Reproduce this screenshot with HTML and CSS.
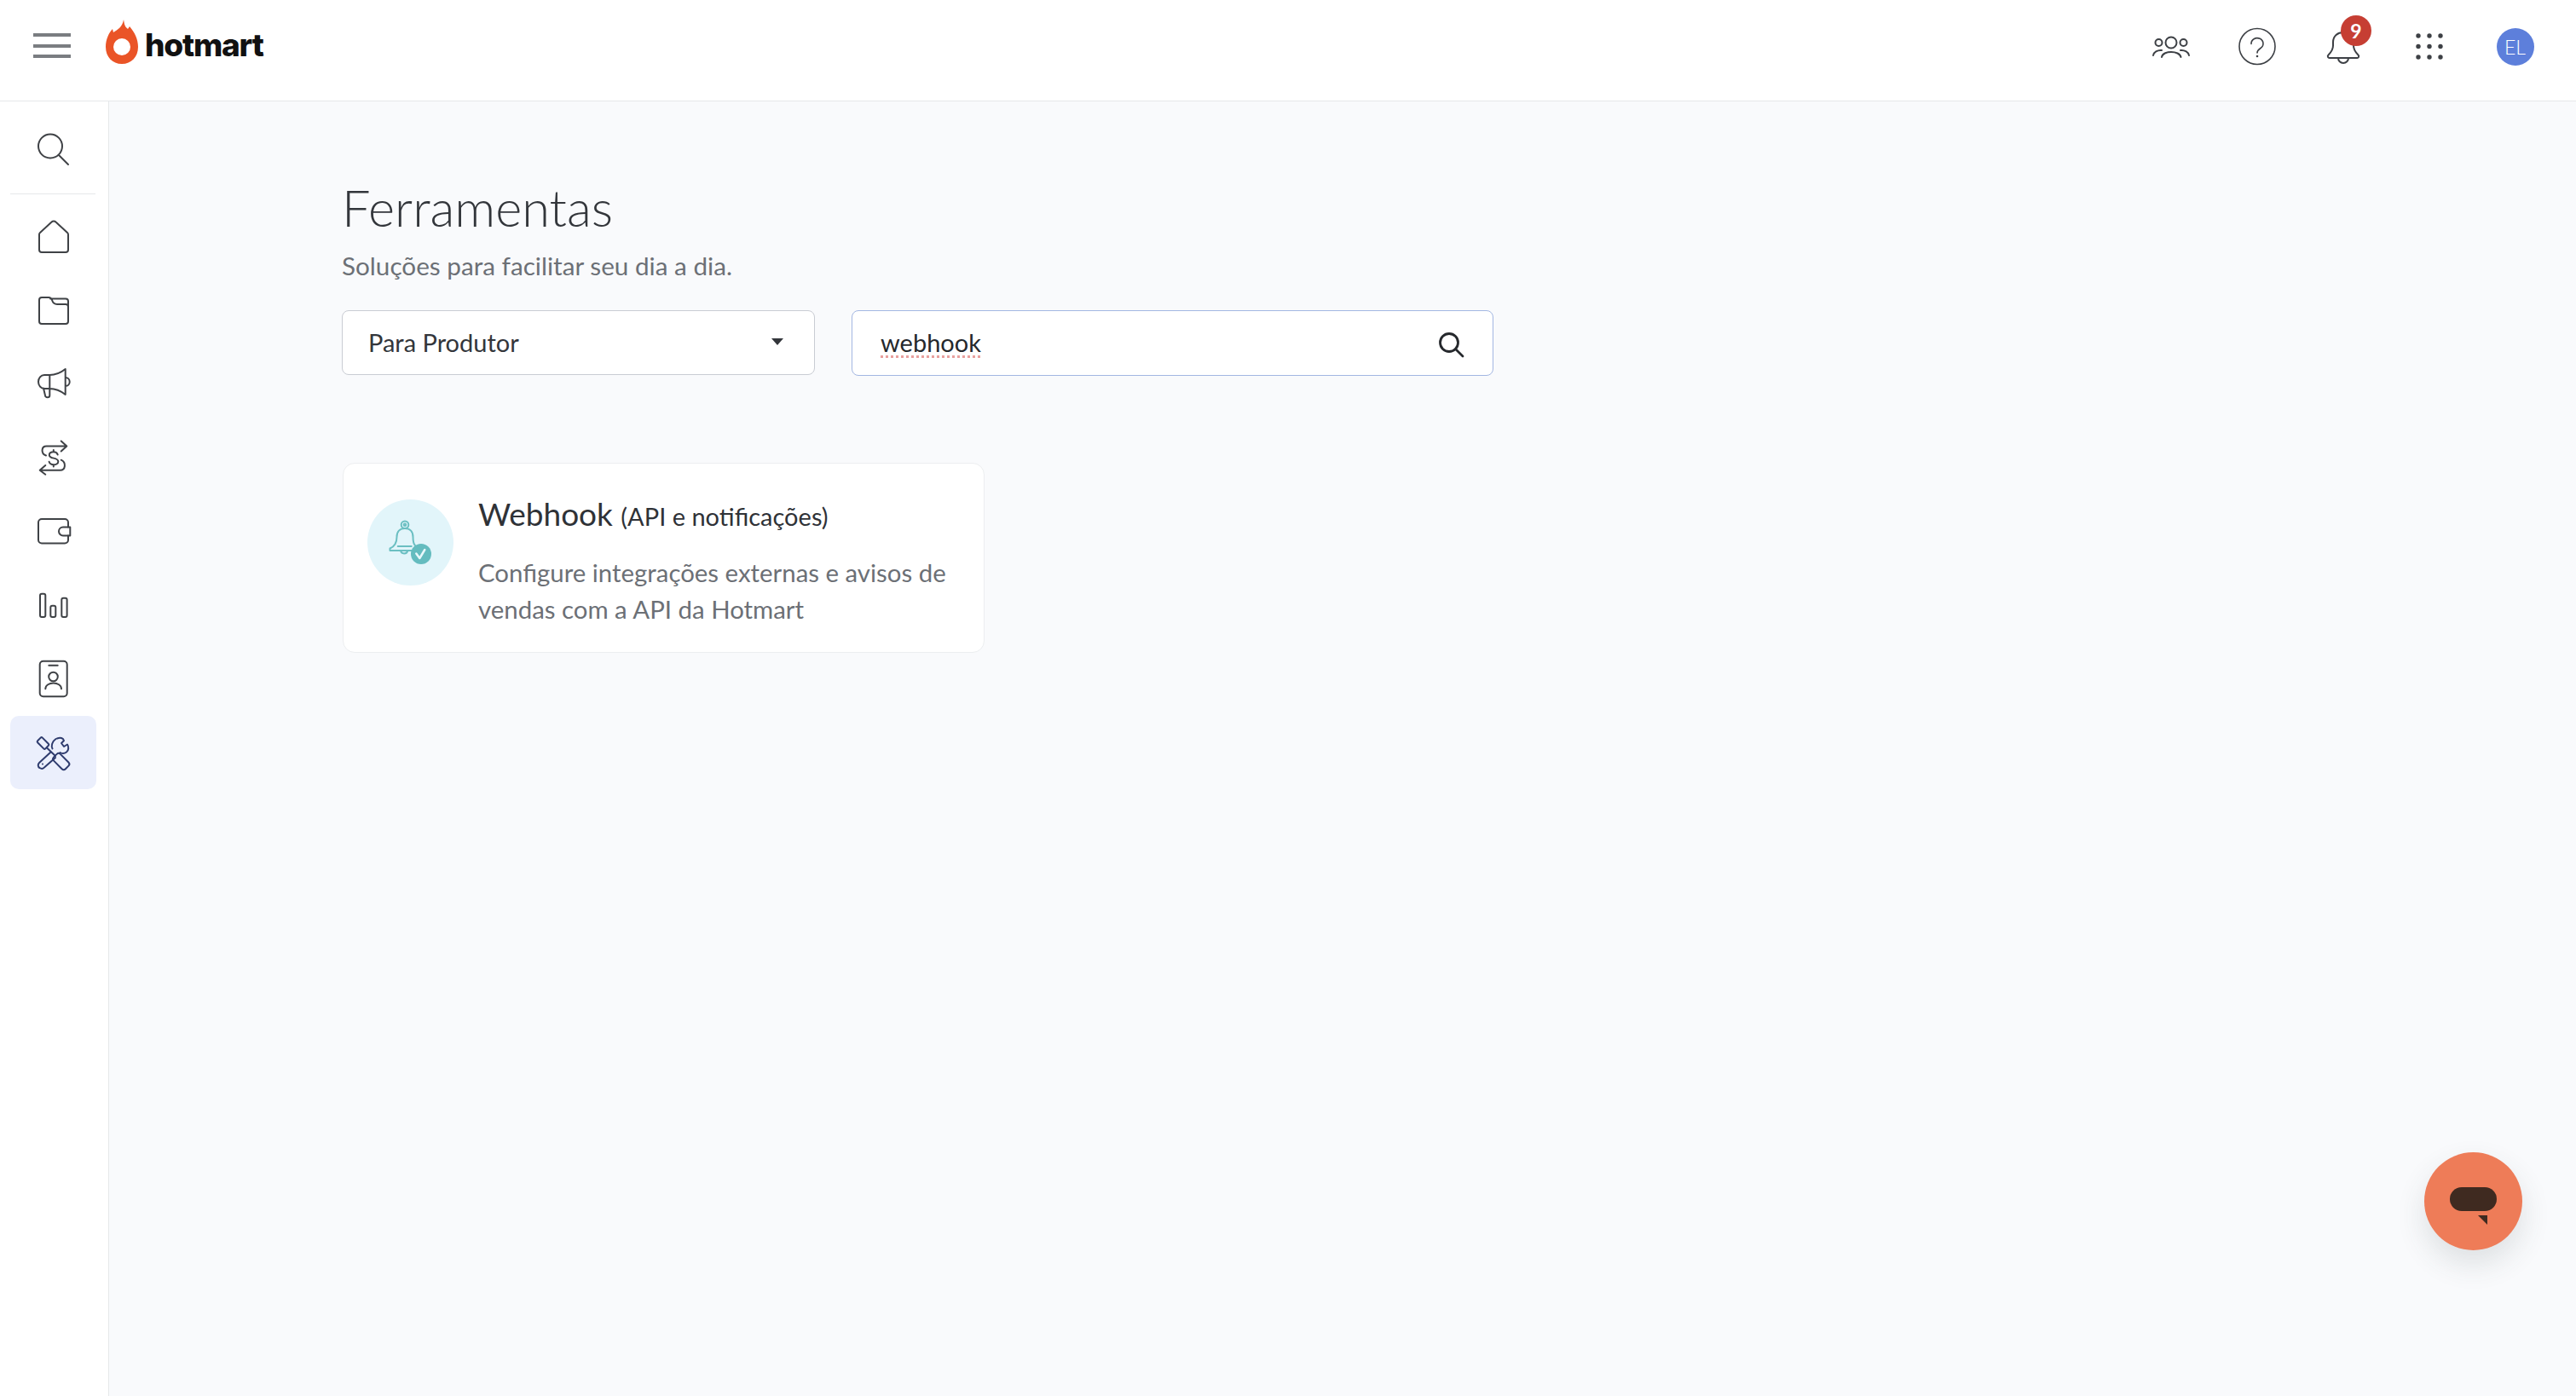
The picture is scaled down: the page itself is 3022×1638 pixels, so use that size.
FILE: index.html
```html
<!DOCTYPE html>
<html lang="pt-BR">
<head>
<meta charset="utf-8">
<title>Ferramentas</title>
<link rel="stylesheet" href="styles.css">
</head>
<body>
<div class="app">
  <header class="topbar">
    <div class="brand">
      <div class="burger"><span></span><span></span><span></span></div>
      <div class="logo">
        <svg class="flame" viewBox="0 0 38 52"><path fill="#ea5427" d="M21 0c1 5 1 8 5 11l2-3c6 7 10 15 10 24 0 12-8 20-19 20S0 44 0 32C0 23 4 15 8 11l1 4C14 12 20 8 21 0Z"/><circle cx="19" cy="32" r="10" fill="#fff"/></svg>
        <span class="logo-text">hotmart</span>
      </div>
    </div>
    <div class="actions">
      <div class="cell"><svg class="ico44" viewBox="0 0 44 44"><circle cx="22" cy="17" r="6.5"/><circle cx="7.5" cy="17" r="4"/><circle cx="36.5" cy="17" r="4"/><path d="M11 34c1-8 21-8 22.5 0M1 32c.5-4 5-6.5 10-6M43 32c-.5-4-5-6.5-10-6"/></svg></div>
      <div class="cell"><svg class="ico44 thin" viewBox="0 0 44 44"><circle cx="22" cy="21.500" r="21"/><path d="M15 18.500a7 6.500 0 1 1 11 5c-2.500 1.700-4 3-4 5.500"/><circle class="solid" cx="22" cy="33" r="1.300"/></svg></div>
      <div class="cell">
        <svg class="ico44" viewBox="0 0 44 44"><path d="M6 35h32a2 2 0 0 0 1.500-3.500c-3-3-5.500-6-5.500-11v-4C34 9 28.500 5 22 5S10 9 10 16.500v4c0 5-2.500 8-5.500 11A2 2 0 0 0 6 35ZM16 35a6 6 0 0 0 12 0"/></svg>
        <span class="badge">9</span>
      </div>
      <div class="cell"><svg class="ico44" viewBox="0 0 44 44"><g class="solid"><circle cx="9" cy="9" r="2.700"/><circle cx="22" cy="9" r="2.700"/><circle cx="35" cy="9" r="2.700"/><circle cx="9" cy="21.500" r="2.700"/><circle cx="22" cy="21.500" r="2.700"/><circle cx="35" cy="21.500" r="2.700"/><circle cx="9" cy="34" r="2.700"/><circle cx="22" cy="34" r="2.700"/><circle cx="35" cy="34" r="2.700"/></g></svg></div>
      <div class="cell"><span class="avatar">EL</span></div>
    </div>
  </header>
  <div class="body">
    <nav class="sidebar">
      <div class="side-search">
        <svg class="nav-ico" viewBox="0 0 50 50"><circle cx="21" cy="21.500" r="14"/><path d="M31 32l11 11"/></svg>
      </div>
      <div class="side-rule"></div>
      <div class="nav">
        <div class="nav-item"><svg class="nav-ico" viewBox="0 0 50 50"><path d="M22.500 4.500a3.500 3.500 0 0 1 5 0L41 17a3 3 0 0 1 1 2v18a3 3 0 0 1-3 3H11a3 3 0 0 1-3-3V19a3 3 0 0 1 1-2Z"/></svg></div>
        <div class="nav-item"><svg class="nav-ico" viewBox="0 0 50 50"><path d="M11 7h8q3 0 4 3 1.500 5 6 5h10q3 0 3 3v17q0 3-3 3H11q-3 0-3-3V10q0-3 3-3ZM21 8.500h18q3 0 3 3V18"/></svg></div>
        <div class="nav-item"><svg class="nav-ico" viewBox="0 0 50 50"><path d="M38.700 5c-5 4-11 7-18.400 7H14c-4 0-7 3.500-7 8s3 8 7 8h6.300c7.400 0 13.400 3 18.400 7ZM20.300 12v24c0 3-5 3-5.300 0l-2-8.500M38.700 15c3 0 5 2.200 5 5s-2 5-5 5"/></svg></div>
        <div class="nav-item"><svg class="nav-ico" viewBox="0 0 50 50"><path d="M33.700 3.500l6.600 6-6.600 6M40 9.500H16.500c-6 0-7 8.500-.5 11M15.300 32l-6.600 5.700 6.600 5M9 37.700h23.500c6.500 0 7.500-9 1.200-12"/><path d="M29.700 19.500c-.6-2-2.400-3.200-4.900-3.200-3 0-5 1.400-5 3.600 0 5 10.500 2.500 10.500 7.500 0 2.300-2.300 3.800-5.300 3.800-2.600 0-4.800-1.200-5.400-3.400M24.800 14v2.300M24.800 31.200v2.300"/></svg></div>
        <div class="nav-item"><svg class="nav-ico" viewBox="0 0 50 50"><path d="M42 18.500V13a4 4 0 0 0-4-4H11a4 4 0 0 0-4 4v20.500a4 4 0 0 0 4 4h27a4 4 0 0 0 4-4V28.500"/><path d="M36 18.500h8.300v10H36a5 5 0 0 1 0-10Z"/></svg></div>
        <div class="nav-item"><svg class="nav-ico" viewBox="0 0 50 50"><rect x="9" y="10.700" width="6.300" height="27.300" rx="2"/><rect x="21.300" y="24.700" width="6" height="13.300" rx="2"/><rect x="34.300" y="15.700" width="6.300" height="22.300" rx="2"/></svg></div>
        <div class="nav-item"><svg class="nav-ico" viewBox="0 0 50 50"><rect x="8.700" y="3.700" width="32" height="41.600" rx="4"/><path d="M19.300 8.700h10.400M15.300 36.300c0-9 18.700-9 18.700 0"/><circle cx="24.500" cy="22" r="5.300"/></svg></div>
        <div class="nav-item active"><svg class="nav-ico tools" viewBox="0 0 50 50"><rect x="6" y="10" width="13" height="8" rx="1.500" transform="rotate(45 12.500 14)"/><path d="M17 19.500l10 9.500"/><rect x="24" y="30" width="19.500" height="11" rx="3" transform="rotate(45 33.700 35.500)"/><path d="M29 8.500c4-1.500 7-.5 8 2.500l-3 3 3 4 4-2.500c1.800 2.500 1.800 7-1 9-2.500 1.800-5 2-7.500.5M23.500 20.500c-1.700-3-.5-8.500 4-11.500M21.500 24.500 8 37c-2 2-1.500 5 .5 6 2 1.300 4.500 1 6-1L27 31"/><circle class="solid" cx="12" cy="38.500" r="1"/></svg></div>
      </div>
    </nav>
    <main class="main">
      <h1 class="title">Ferramentas</h1>
      <p class="subtitle">Soluções para facilitar seu dia a dia.</p>
      <div class="filters">
        <div class="select">
          <span>Para Produtor</span>
          <span class="caret"></span>
        </div>
        <div class="search">
          <span class="query">webhook</span>
          <svg class="search-ico" viewBox="0 0 30 30"><circle cx="12" cy="12" r="10.500"/><path d="M19.500 19.500 28 28"/></svg>
        </div>
      </div>
      <article class="card">
        <div class="card-icon">
          <svg class="card-svg" viewBox="0 0 101 101"><circle cx="44" cy="29.700" r="4.300"/><circle cx="44" cy="29.700" r="1.300"/><path d="M44 34c-6 0-9.500 4-9.500 10 0 7-2 11-8 13.500V60h33M44 34c6 0 9.500 4 9.500 10 0 5 .5 8 2.500 10M35.700 55h16M39 60c.5 4.500 7.500 4.500 8.300 0"/><circle class="teal" cx="63" cy="64" r="12"/><path class="tick" d="M57.300 63.500l4 5.500 6-10"/></svg>
        </div>
        <div class="card-text">
          <h2 class="card-title">Webhook <small>(API e notificações)</small></h2>
          <p class="card-desc">Configure integrações externas e avisos de vendas com a API da Hotmart</p>
        </div>
      </article>
    </main>
  </div>
  <div class="fab"><span class="pill"></span><span class="tail"></span></div>
</div>
</body>
</html>
```
FILE: styles.css
```css
* { box-sizing: border-box; }
html, body { margin: 0; height: 100%; overflow: hidden; }
body { font-family: "Lato", "Noto Sans", sans-serif; color: #2f3237; background: #f9fafc; }
.app { height: 1638px; display: flex; flex-direction: column; }

.topbar { height: 119px; flex: none; background: #fff; border-bottom: 1px solid #e6e8ea; display: flex; justify-content: space-between; align-items: center; padding: 0 21px 0 39px; }
.brand { display: flex; align-items: flex-start; gap: 41px; margin-bottom: 0; }
.burger { width: 44px; height: 29px; display: flex; flex-direction: column; justify-content: space-between; margin-top: 16px; }
.burger span { height: 4px; background: #7a7d81; }
.logo { display: flex; align-items: flex-end; gap: 8px; margin-bottom: 20px; }
.flame { width: 38px; height: 52px; display: block; }
.logo-text { font-family: "Inter", sans-serif; font-weight: 800; font-size: 37px; letter-spacing: -1.2px; line-height: 44px; color: #111; }

.actions { display: flex; padding-bottom: 8px; }
.cell { width: 101px; height: 44px; display: flex; justify-content: center; position: relative; }
.ico44 { width: 44px; height: 44px; overflow: visible; fill: none; stroke: #3d4045; stroke-width: 2; stroke-linecap: round; stroke-linejoin: round; }
.ico44.thin { stroke-width: 1.600; }
.ico44 .solid { fill: #3d4045; stroke: none; }
.badge { position: absolute; left: 48px; top: -15px; width: 36px; height: 36px; border-radius: 50%; background: #c63e33; color: #fff; font-size: 23px; font-weight: 700; display: flex; align-items: center; justify-content: center; }
.avatar { width: 44px; height: 44px; border-radius: 50%; background: #5d7fdb; color: #fff; font-size: 23px; font-weight: 300; display: flex; align-items: center; justify-content: center; }

.body { flex: 1; display: flex; min-height: 0; }
.sidebar { width: 128px; flex: none; background: #fff; border-right: 1px solid #e6e8ea; }
.side-search { height: 108px; display: flex; align-items: center; padding: 4px 0 0 38px; }
.side-rule { height: 1px; margin: 0 15px 0 12px; background: #e6e8ea; }
.nav { padding-top: 10px; display: flex; flex-direction: column; }
.nav-item { width: 101px; height: 86px; margin-left: 12px; padding-left: 26px; display: flex; align-items: center; border-radius: 10px; }
.nav-item.active { background: #ebeffc; }
.nav-ico { width: 50px; height: 50px; flex: none; fill: none; stroke: #3f4246; stroke-width: 2; stroke-linecap: round; stroke-linejoin: round; }
.nav-ico.tools { stroke: #2f3c6e; }
.nav-ico .solid { fill: #2f3c6e; stroke: none; }

.main { flex: 1; padding: 89px 0 0 273px; }
.title { margin: 0; font-size: 59.500px; font-weight: 300; line-height: 70px; color: #33363b; }
.subtitle { margin: 0; font-size: 29.700px; line-height: 40px; color: #6c7076; padding-top: 14px; }
.filters { display: flex; gap: 43px; margin-top: 32px; align-items: flex-start; }
.select { width: 555px; height: 76px; background: #fff; border: 1px solid #c9ccd3; border-radius: 8px; display: flex; justify-content: space-between; align-items: center; padding: 0 36px 2px 30px; font-size: 29px; color: #33363b; }
.caret { width: 0; height: 0; border-left: 7px solid transparent; border-right: 7px solid transparent; border-top: 8px solid #33363b; }
.search { width: 753px; height: 77px; background: #fff; border: 1px solid #a3b7e2; border-radius: 8px; display: flex; justify-content: space-between; align-items: center; padding: 0 33px; font-size: 29px; color: #25282c; }
.query { margin-bottom: 2px; text-decoration: underline dotted #e8a09e 3px; text-underline-offset: 4px; }
.search-ico { width: 30px; height: 30px; fill: none; stroke: #25282c; stroke-width: 2.800; stroke-linecap: round; margin-top: 4px; }

.card { width: 753px; height: 223px; margin: 102px 0 0 1px; background: #fff; border: 1px solid #eceef0; border-radius: 14px; display: flex; padding: 42px 28px 0 28px; gap: 29px; }
.card-icon { width: 101px; height: 101px; flex: none; border-radius: 50%; background: #e2f5fa; }
.card-svg { width: 101px; height: 101px; display: block; fill: none; stroke: #6bbfc2; stroke-width: 2; stroke-linejoin: round; stroke-linecap: round; }
.card-svg .teal { fill: #64bcbf; stroke: none; }
.card-svg .tick { stroke: #e9f8fb; stroke-width: 2.500; }
.card-text { margin-top: -8px; }
.card-title { margin: 0; font-size: 37px; font-weight: 400; line-height: 50px; color: #2f3237; }
.card-title small { font-size: 29px; }
.card-desc { margin: 19px 0 0; font-size: 29.400px; line-height: 43px; color: #6c7076; }

.fab { position: fixed; left: 2844px; top: 1352px; width: 115px; height: 115px; border-radius: 50%; background: #ee7c58; box-shadow: 0 16px 34px rgba(60, 70, 70, 0.14); }
.pill { position: absolute; left: 30px; top: 41px; width: 55px; height: 28px; border-radius: 14px; background: #3f2a20; }
.tail { position: absolute; left: 63px; top: 74px; width: 0; height: 0; border-top: 11px solid #3f2a20; border-left: 11px solid transparent; }
```
